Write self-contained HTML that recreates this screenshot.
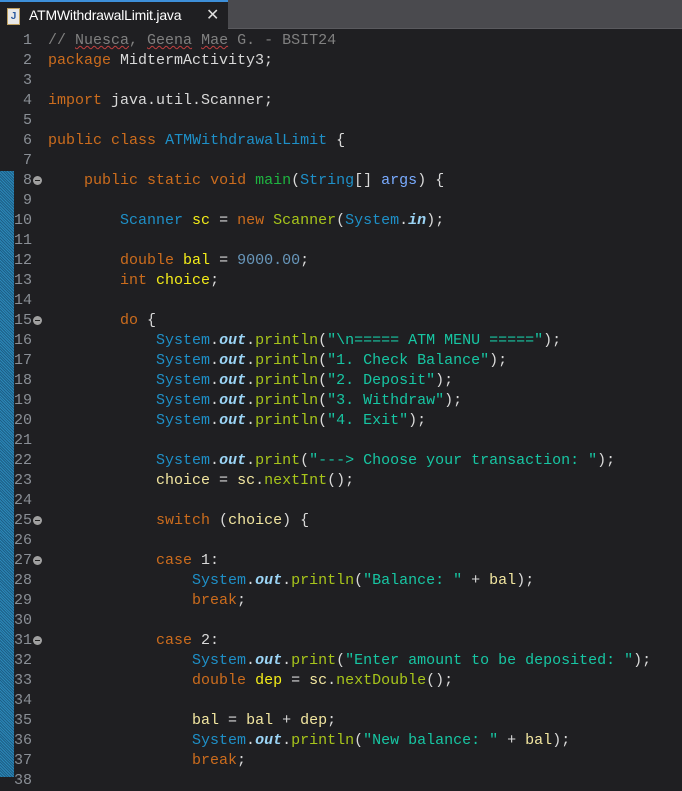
<!DOCTYPE html>
<html><head><meta charset="utf-8"><style>
body{margin:0;width:682px;height:777px;overflow:hidden;background:#1f1f22;font-family:"Liberation Mono",monospace;}
#tabbar{position:absolute;left:0;top:0;width:682px;height:28px;background:#4a4a4e;border-bottom:1px solid #5a5a5e;}
#tab{position:absolute;left:0;top:0;width:228px;height:29px;background:#1f1f22;border-top:2px solid #3d8fd9;box-sizing:border-box;}
#tab .ic{position:absolute;left:7px;top:6px;width:11px;height:15px;background:#e8e8e8;border:1px solid #bfa060;font:bold 10px "Liberation Sans",sans-serif;color:#2a5aa0;text-align:center;line-height:15px;}
#tab .t{position:absolute;left:29px;top:5px;font:14px "Liberation Sans",sans-serif;color:#fff;letter-spacing:-0.2px;}
#tab .x{position:absolute;left:206px;top:3px;font:16px "Liberation Sans",sans-serif;color:#ddd;}
#stripe{position:absolute;left:0;top:171px;width:14px;height:606px;background:repeating-linear-gradient(45deg,#1d5f86 0 1px,#2b87b8 1px 2px);}
.ln{position:absolute;width:32px;text-align:right;font-size:15px;color:#8a8f96;line-height:20px;}
.c{position:absolute;left:48px;font-size:15px;line-height:20px;white-space:pre;color:#d9d9d9;}
.fold{position:absolute;left:33px;width:9px;height:9px;border-radius:50%;background:#a0a0a0;}
.fold:after{content:"";position:absolute;left:2px;top:4px;width:5px;height:1px;background:#222;}
.k{color:#cc6c1d}.cm{color:#808080}.ty{color:#1e90c8}.o{color:#9bd4f5;font-weight:bold;font-style:italic}.m{color:#a7c51b}.s{color:#17c6a3}.d{color:#f3ec19}.v{color:#f2e6a0}.n{color:#6897bb}.mn{color:#1eb540}.p{color:#79abff}
.u{text-decoration:underline wavy #c04040;text-decoration-thickness:1px}
</style></head><body>
<div id="tabbar"></div>
<div id="tab"><div class="ic">J</div><div class="t">ATMWithdrawalLimit.java</div><div class="x">✕</div></div>
<div id="stripe"></div>
<div class="ln" style="top:31px">1</div><div class="ln" style="top:51px">2</div><div class="ln" style="top:71px">3</div><div class="ln" style="top:91px">4</div><div class="ln" style="top:111px">5</div><div class="ln" style="top:131px">6</div><div class="ln" style="top:151px">7</div><div class="ln" style="top:171px">8</div><div class="ln" style="top:191px">9</div><div class="ln" style="top:211px">10</div><div class="ln" style="top:231px">11</div><div class="ln" style="top:251px">12</div><div class="ln" style="top:271px">13</div><div class="ln" style="top:291px">14</div><div class="ln" style="top:311px">15</div><div class="ln" style="top:331px">16</div><div class="ln" style="top:351px">17</div><div class="ln" style="top:371px">18</div><div class="ln" style="top:391px">19</div><div class="ln" style="top:411px">20</div><div class="ln" style="top:431px">21</div><div class="ln" style="top:451px">22</div><div class="ln" style="top:471px">23</div><div class="ln" style="top:491px">24</div><div class="ln" style="top:511px">25</div><div class="ln" style="top:531px">26</div><div class="ln" style="top:551px">27</div><div class="ln" style="top:571px">28</div><div class="ln" style="top:591px">29</div><div class="ln" style="top:611px">30</div><div class="ln" style="top:631px">31</div><div class="ln" style="top:651px">32</div><div class="ln" style="top:671px">33</div><div class="ln" style="top:691px">34</div><div class="ln" style="top:711px">35</div><div class="ln" style="top:731px">36</div><div class="ln" style="top:751px">37</div><div class="ln" style="top:771px">38</div>
<div class="fold" style="top:176px"></div><div class="fold" style="top:316px"></div><div class="fold" style="top:516px"></div><div class="fold" style="top:556px"></div><div class="fold" style="top:636px"></div>
<div class="c" style="top:31px"><span class="cm">// <span class="u">Nuesca</span>, <span class="u">Geena</span> <span class="u">Mae</span> G. - BSIT24</span></div>
<div class="c" style="top:51px"><span class="k">package</span> MidtermActivity3;</div>
<div class="c" style="top:91px"><span class="k">import</span> java.util.Scanner;</div>
<div class="c" style="top:131px"><span class="k">public</span> <span class="k">class</span> <span class="ty">ATMWithdrawalLimit</span> {</div>
<div class="c" style="top:171px">    <span class="k">public</span> <span class="k">static</span> <span class="k">void</span> <span class="mn">main</span>(<span class="ty">String</span>[] <span class="p">args</span>) {</div>
<div class="c" style="top:211px">        <span class="ty">Scanner</span> <span class="d">sc</span> = <span class="k">new</span> <span class="m">Scanner</span>(<span class="ty">System</span>.<span class="o">in</span>);</div>
<div class="c" style="top:251px">        <span class="k">double</span> <span class="d">bal</span> = <span class="n">9000.00</span>;</div>
<div class="c" style="top:271px">        <span class="k">int</span> <span class="d">choice</span>;</div>
<div class="c" style="top:311px">        <span class="k">do</span> {</div>
<div class="c" style="top:331px">            <span class="ty">System</span>.<span class="o">out</span>.<span class="m">println</span>(<span class="s">"\n===== ATM MENU ====="</span>);</div>
<div class="c" style="top:351px">            <span class="ty">System</span>.<span class="o">out</span>.<span class="m">println</span>(<span class="s">"1. Check Balance"</span>);</div>
<div class="c" style="top:371px">            <span class="ty">System</span>.<span class="o">out</span>.<span class="m">println</span>(<span class="s">"2. Deposit"</span>);</div>
<div class="c" style="top:391px">            <span class="ty">System</span>.<span class="o">out</span>.<span class="m">println</span>(<span class="s">"3. Withdraw"</span>);</div>
<div class="c" style="top:411px">            <span class="ty">System</span>.<span class="o">out</span>.<span class="m">println</span>(<span class="s">"4. Exit"</span>);</div>
<div class="c" style="top:451px">            <span class="ty">System</span>.<span class="o">out</span>.<span class="m">print</span>(<span class="s">"---&gt; Choose your transaction: "</span>);</div>
<div class="c" style="top:471px">            <span class="v">choice</span> = <span class="v">sc</span>.<span class="m">nextInt</span>();</div>
<div class="c" style="top:511px">            <span class="k">switch</span> (<span class="v">choice</span>) {</div>
<div class="c" style="top:551px">            <span class="k">case</span> 1:</div>
<div class="c" style="top:571px">                <span class="ty">System</span>.<span class="o">out</span>.<span class="m">println</span>(<span class="s">"Balance: "</span> + <span class="v">bal</span>);</div>
<div class="c" style="top:591px">                <span class="k">break</span>;</div>
<div class="c" style="top:631px">            <span class="k">case</span> 2:</div>
<div class="c" style="top:651px">                <span class="ty">System</span>.<span class="o">out</span>.<span class="m">print</span>(<span class="s">"Enter amount to be deposited: "</span>);</div>
<div class="c" style="top:671px">                <span class="k">double</span> <span class="d">dep</span> = <span class="v">sc</span>.<span class="m">nextDouble</span>();</div>
<div class="c" style="top:711px">                <span class="v">bal</span> = <span class="v">bal</span> + <span class="v">dep</span>;</div>
<div class="c" style="top:731px">                <span class="ty">System</span>.<span class="o">out</span>.<span class="m">println</span>(<span class="s">"New balance: "</span> + <span class="v">bal</span>);</div>
<div class="c" style="top:751px">                <span class="k">break</span>;</div>
</body></html>
